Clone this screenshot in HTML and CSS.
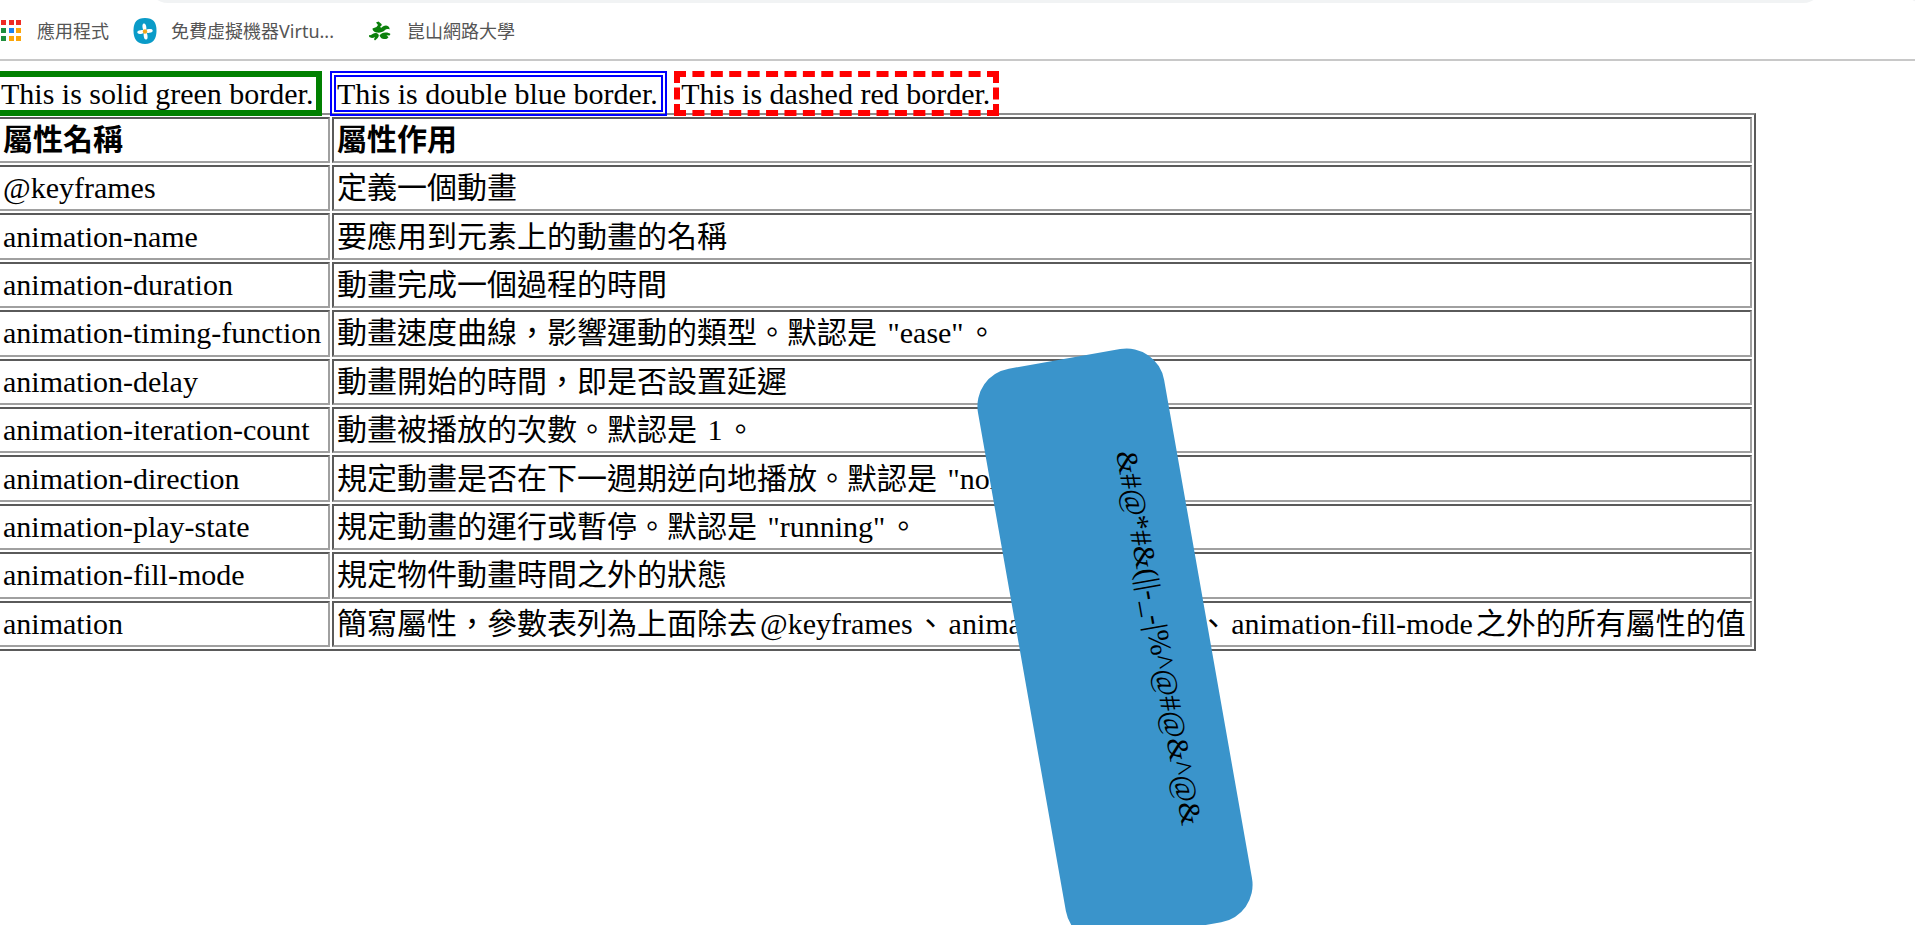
FILE: index.html
```html
<!DOCTYPE html>
<html lang="zh-Hant">
<head>
<meta charset="utf-8">
<title>CSS animation</title>
<link rel="stylesheet" href="styles.css">
</head>
<body>
<header class="browser">
  <div class="address-row">
    <div class="address-bar"></div>
    <div class="address-button"></div>
  </div>
  <nav class="bookmarks">
    <a class="bookmark apps" href="#">
      <svg class="icon" width="21" height="22" viewBox="0 0 21 22" aria-hidden="true">
        <path fill="#ee2a24" d="M1 0h5v5H1zM9 0h5v5H9zM16 0h5v5h-5z"/>
        <path fill="#1e8e3e" d="M1 8h5v5H1zM1 16h5v5H1z"/>
        <path fill="#1a82f0" d="M9 8h5v5H9z"/>
        <path fill="#fba50a" d="M16 8h5v5h-5zM9 16h5v5H9zM16 16h5v5h-5z"/>
      </svg>
      <span>應用程式</span>
    </a>
    <a class="bookmark vm" href="#">
      <svg class="icon" width="24" height="26" viewBox="0 0 24 26" aria-hidden="true">
        <path fill="#0a9bc8" d="M12 0C20 0 23.500 4 23.500 12.500S20 26 12 26 .5 21 .5 12.500 4 0 12 0z"/>
        <g fill="#fff" transform="rotate(-8 12 13.5)">
          <ellipse cx="12" cy="9.300" rx="1.900" ry="3.800"/>
          <ellipse cx="12" cy="17.800" rx="1.900" ry="3.800"/>
          <ellipse cx="7.800" cy="13.500" rx="3.600" ry="1.900"/>
          <ellipse cx="16.200" cy="13.500" rx="3.600" ry="1.900"/>
        </g>
        <circle cx="12" cy="13.500" r="2.200" fill="#f2a81d"/>
      </svg>
      <span>免費虛擬機器Virtu...</span>
    </a>
    <a class="bookmark school" href="#">
      <svg class="icon" width="22" height="20" viewBox="0 0 22 20" fill="#0b800b" aria-hidden="true">
        <path d="M7 1.500L9.500 .5l3 2.500c.6 1-.2 2-1.300 2.500l.8 1.500c1.500-1.500 3-2.500 5-2.500 1.500 0 3 1 3.500 2.500v1.500c-2-.8-3.500-.3-5 1-2 1.800-5 2.500-8 2C5 11 3.500 9.500 3.500 7.500L7.500 6 9 4z"/>
        <path d="M0 14c1.500.6 2.500-.2 4-1.200 2-1.200 4.500-.8 5.500.8.6 1.200.2 2.400-.8 3.400L6 19.500l-1-1.200 1-2.300c-2 1-4 1.500-6-.5z"/>
        <path d="M10.500 14.500c1.500-2 4-3.300 6.500-3 1.800 0 3 .5 4.500 1.500l-1 1.500-3-.3 2 2c-1 1.500-2.500 2-4.500 1.800-2-.1-3.500-1-4.500-3.500z"/>
      </svg>
      <span>崑山網路大學</span>
    </a>
  </nav>
</header>
<main class="page">
  <div class="borders">
    <span class="box solid">This is solid green border.</span>
    <span class="box double">This is double blue border.</span>
    <span class="box dashed">This is dashed red border.</span>
  </div>
  <table class="properties">
    <thead>
      <tr><th class="name" scope="col">屬性名稱</th><th scope="col">屬性作用</th></tr>
    </thead>
    <tbody>
      <tr><td>@keyframes</td><td>定義一個動畫</td></tr>
      <tr><td>animation-name</td><td>要應用到元素上的動畫的名稱</td></tr>
      <tr><td>animation-duration</td><td>動畫完成一個過程的時間</td></tr>
      <tr><td>animation-timing-function</td><td>動畫速度曲線，影響運動的類型。默認是 <span class="term">"ease"</span>。</td></tr>
      <tr><td>animation-delay</td><td>動畫開始的時間，即是否設置延遲</td></tr>
      <tr><td>animation-iteration-count</td><td>動畫被播放的次數。默認是 <span class="term">1</span>。</td></tr>
      <tr><td>animation-direction</td><td>規定動畫是否在下一週期逆向地播放。默認是 <span class="term">"normal"</span>。</td></tr>
      <tr><td>animation-play-state</td><td>規定動畫的運行或暫停。默認是 <span class="term">"running"</span>。</td></tr>
      <tr><td>animation-fill-mode</td><td>規定物件動畫時間之外的狀態</td></tr>
      <tr><td>animation</td><td>簡寫屬性，參數表列為上面除去<span class="term">@keyframes</span>、<span class="term">animation-play-state</span>、<span class="term">animation-fill-mode</span>之外的所有屬性的值</td></tr>
    </tbody>
  </table>
</main>
<div class="spinner">&amp;#@*#&amp;(||-_-|%^@#@&amp;^@&amp;</div>
</body>
</html>
```
FILE: styles.css
```css
html,
body {
  height: 100%;
}

body {
  margin: 0;
  position: relative;
  overflow: hidden;
  background: #fff;
  color: #000;
  font-family: "Liberation Serif", "Noto Sans CJK TC", serif;
  font-size: 30px;
}

.browser {
  border-bottom: 2px solid #c8c8c8;
  font-family: "Noto Sans", "Noto Sans CJK TC", sans-serif;
  font-size: 18px;
}

.address-row {
  display: flex;
  justify-content: space-between;
  height: 3px;
  padding-left: 148px;
  overflow: hidden;
}

.address-bar {
  flex: 1;
  height: 40px;
  margin: -37px 80px 0 0;
  border-radius: 20px;
  background: #f1f3f4;
}

.address-button {
  width: 40px;
  height: 40px;
  margin: -37px -28px 0 0;
  border-radius: 20px;
  background: #f1f3f4;
}

.bookmarks {
  display: flex;
  align-items: center;
  height: 56px;
}

.bookmark {
  display: flex;
  align-items: center;
  color: #555;
  line-height: 24px;
  text-decoration: none;
}

.apps {
  gap: 16px;
}

.vm {
  gap: 14px;
  margin-left: 24px;
}

.school {
  gap: 16px;
  margin-left: 35px;
}

.page {
  padding-top: 14px;
}

.borders {
  position: relative;
  z-index: 1;
  height: 38px;
  margin-left: -6px;
  line-height: 38px;
  white-space: nowrap;
}

.box {
  padding: 0 3px 0 1px;
  border-width: 6px;
}

.solid {
  border-style: solid;
  border-color: #008000;
}

.double {
  border-style: double;
  border-color: #00f;
}

.dashed {
  border-style: dashed;
  border-color: #f00;
}

.properties {
  width: 92%;
  height: 538px;
  margin-left: -6px;
  border: 2px solid;
  border-color: #8c8c8c #5a5a5a #5a5a5a #8c8c8c;
  border-spacing: 2px;
  line-height: 38px;
}

.properties th,
.properties td {
  padding: 2px 3px;
  border: 2px solid;
  border-color: #5a5a5a #a0a0a0 #a0a0a0 #5a5a5a;
  text-align: left;
  white-space: nowrap;
}

.properties .name {
  width: 322px;
}

.term {
  margin: 0 3px;
}

.spinner {
  position: absolute;
  top: 551px;
  left: 824px;
  box-sizing: border-box;
  width: 582px;
  height: 189px;
  padding-top: 32px;
  border-radius: 38px;
  background: #3a94cb;
  line-height: 36px;
  text-align: center;
  transform: rotate(80deg);
}
```
